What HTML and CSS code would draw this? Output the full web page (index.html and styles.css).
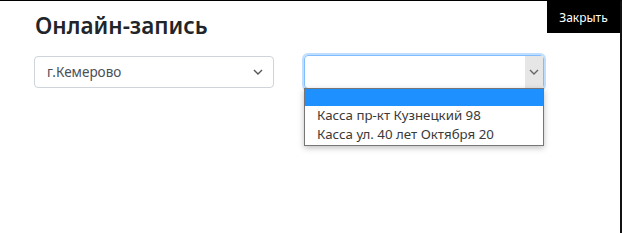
FILE: index.html
```html
<!DOCTYPE html>
<html lang="ru">
<head>
    <meta charset="UTF-8">
    <title>Онлайн-запись</title>
    <link rel="stylesheet" href="styles.css">
</head>
<body>
    <div class="modal">
        <button class="close-btn" type="button">Закрыть</button>
        <div class="content">
            <h1>Онлайн-запись</h1>
            <div class="row">
                <div class="select">
                    <span class="select-text">г.Кемерово</span>
                    <svg class="chevron" width="10" height="6" viewBox="0 0 10 6"><path d="M1 1l4 4 4-4" fill="none" stroke="#555" stroke-width="1.4"/></svg>
                </div>
                <div class="select-wrap">
                    <div class="select focused">
                        <span class="select-text"></span>
                        <span class="arrow-box">
                            <svg width="10" height="6" viewBox="0 0 10 6"><path d="M1 1l4 4 4-4" fill="none" stroke="#666" stroke-width="1.4"/></svg>
                        </span>
                    </div>
                    <ul class="options">
                        <li class="selected">&nbsp;</li>
                        <li>Касса пр-кт Кузнецкий 98</li>
                        <li>Касса ул. 40 лет Октября 20</li>
                    </ul>
                </div>
            </div>
        </div>
    </div>
</body>
</html>
```

FILE: styles.css
```css
html, body {
    margin: 0;
    padding: 0;
    background: white;
}
.modal {
    position: relative;
    height: 232px;
    border-top: 1px solid #000;
    border-right: 2px solid #111;
    font-family: "Noto Sans", "Open Sans", sans-serif;
    color: #212529;
}
.close-btn {
    position: absolute;
    top: 0;
    right: 0;
    width: 73px;
    height: 32px;
    background: #000;
    color: white;
    border: none;
    font-family: "Noto Sans", sans-serif;
    font-size: 12px;
    padding: 0;
}
.content {
    padding: 9px 0 0 34px;
}
h1 {
    margin: 0 0 14px 1px;
    font-size: 22.5px;
    font-weight: 600;
    line-height: 32px;
    color: #212529;
}
.row {
    display: flex;
    gap: 30px;
}
.select {
    position: relative;
    box-sizing: border-box;
    width: 240px;
    height: 32px;
    border: 1px solid #ced4da;
    border-radius: 4px;
    display: flex;
    align-items: center;
    padding: 0 10px 0 12px;
}
.select-text {
    flex: 1;
    font-size: 13.5px;
    color: #495057;
}
.select-wrap {
    position: relative;
    margin-top: -1px;
}
.select.focused {
    height: 34px;
    border-color: #80bdff;
    box-shadow: 0 0 0 2px rgba(0, 123, 255, 0.25);
    padding-right: 0;
}
.arrow-box {
    width: 18px;
    height: 32px;
    background: #e6e6e6;
    display: flex;
    align-items: center;
    justify-content: center;
}
.options {
    position: absolute;
    top: 33px;
    left: 0;
    width: 240px;
    box-sizing: border-box;
    margin: 0;
    padding: 0 0 1px;
    list-style: none;
    background: white;
    border: 1px solid #767676;
    box-shadow: 0 2px 6px rgba(0, 0, 0, 0.25);
    font-size: 13.3px;
    color: #3a3a3a;
}
.options li {
    height: 19px;
    line-height: 19px;
    padding-left: 12px;
}
.options li.selected {
    background: #1e90ff;
    height: 17px;
}
```
